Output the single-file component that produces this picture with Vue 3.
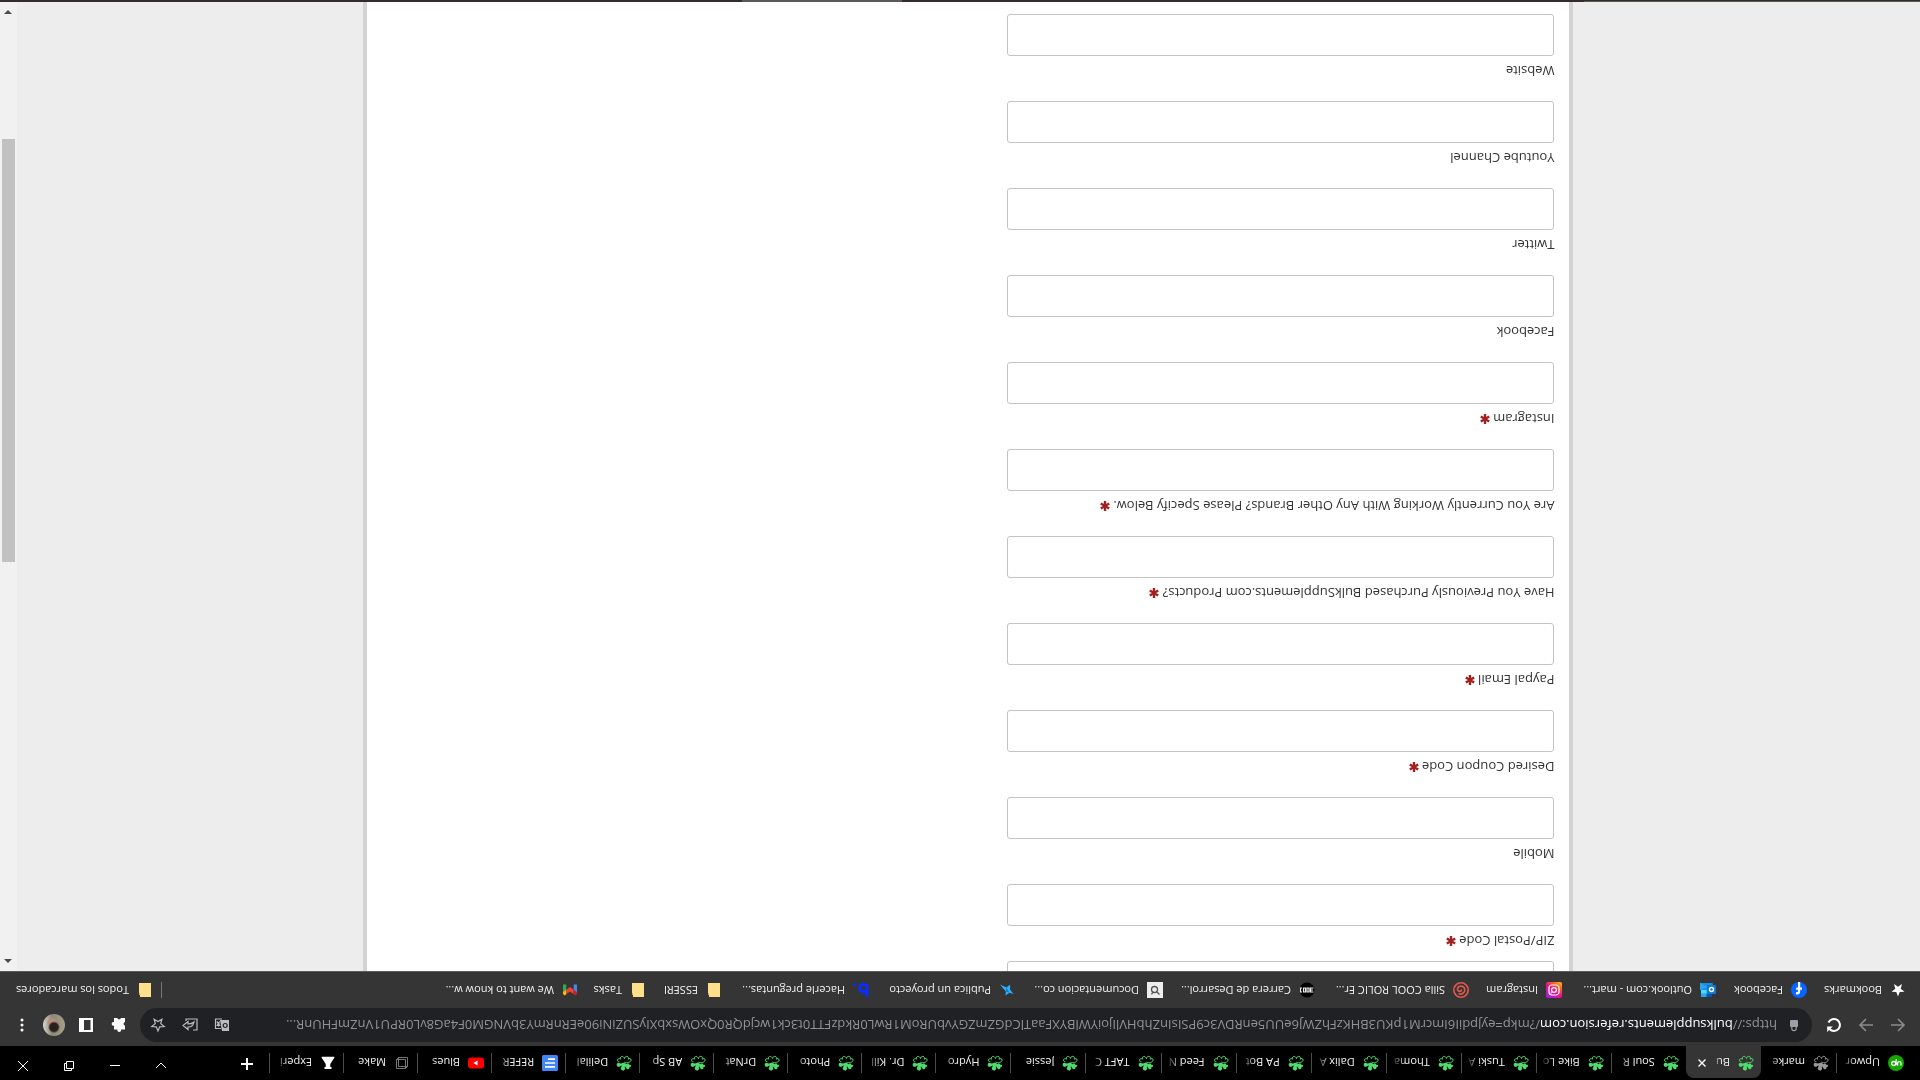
<script setup>
const tabs = [
  { title: 'Upwor', icon: 'upwork' },
  { title: 'marke', icon: 'pinwheel-grey' },
  { title: 'Bu', icon: 'pinwheel', active: true },
  { title: 'Soul R', icon: 'pinwheel' },
  { title: 'Bike Lo', icon: 'pinwheel' },
  { title: 'Tuski A', icon: 'pinwheel' },
  { title: 'Thoma', icon: 'pinwheel' },
  { title: 'Dalix A', icon: 'pinwheel' },
  { title: 'PA Bot', icon: 'pinwheel' },
  { title: 'Feed N', icon: 'pinwheel' },
  { title: 'TAFT C', icon: 'pinwheel' },
  { title: 'Jessie', icon: 'pinwheel' },
  { title: 'Hydro', icon: 'pinwheel' },
  { title: 'Dr. Kill', icon: 'pinwheel' },
  { title: 'Photo', icon: 'pinwheel' },
  { title: 'DrNat', icon: 'pinwheel' },
  { title: 'AB Sp', icon: 'pinwheel' },
  { title: 'Delilal', icon: 'pinwheel' },
  { title: 'REFER', icon: 'docs' },
  { title: 'Blues', icon: 'youtube' },
  { title: 'Make', icon: 'box' },
  { title: 'Experi', icon: 'flask' },
]

const bookmarks = [
  { title: 'Bookmarks', icon: 'star', w: 99 },
  { title: 'Facebook', icon: 'facebook', w: 91 },
  { title: 'Outlook.com - mart...', icon: 'outlook', w: 154 },
  { title: 'Instagram', icon: 'instagram', w: 93 },
  { title: 'Silla COOL ROLIC Er...', icon: 'swirl', w: 154 },
  { title: 'Carrera de Desarrol...', icon: 'badge', w: 152 },
  { title: 'Documentacion co...', icon: 'search', w: 148 },
  { title: 'Publica un proyecto', icon: 'bird', w: 146 },
  { title: 'Hacerle preguntas...', icon: 'letter', w: 147 },
  { title: 'ESSERI', icon: 'folder', w: 76 },
  { title: 'Tasks', icon: 'folder', w: 68 },
  { title: 'We want to know w...', icon: 'gmail', w: 140 },
]

const query =
  '/?mkp=eyJpdiI6ImcrM1pKU3BHKzFhZWJ6eUU5enRDV3c9PSIsInZhbHVlIjoiYWlBYXFaaTlCdGZmZGYvbURoM1RwL0RkdzFTT0t3ck1wcjdQR0QxOWsxbXIySUZiNi90eERnRmY3bVNGM0F4aG8vL0RPU1VnZmFHUnR...'

const fields = [
  { id: 'zip', label: 'ZIP/Postal Code', required: true },
  { id: 'mobile', label: 'Mobile' },
  { id: 'coupon', label: 'Desired Coupon Code', required: true },
  { id: 'paypal', label: 'Paypal Email', required: true },
  { id: 'purchased', label: 'Have You Previously Purchased BulkSupplements.com Products?', required: true },
  { id: 'brands', label: 'Are You Currently Working With Any Other Brands? Please Specify Below.', required: true },
  { id: 'instagram', label: 'Instagram', required: true },
  { id: 'facebook', label: 'Facebook' },
  { id: 'twitter', label: 'Twitter' },
  { id: 'youtube', label: 'Youtube Channel' },
  { id: 'website', label: 'Website' },
]
</script>

<template>
  <div class="screen">
    <svg class="sprite" aria-hidden="true">
      <symbol id="i-pinwheel" viewBox="0 0 16 16">
        <path d="M7.800 8.600 5.300 6.800 4 8 2.600 6.300 .8 6 1.400 3.900 2.600 3.700 2.900 1.900 5 1.700 6.700 4.400 7.200 4.400 6.900 1.800 8.600.3 10.500 1 11.300 2.400 10.300 5.200 10.800 5.600 13 4 15 4.700 15.400 7 14.200 8.300 11 7.500Z" fill="currentColor" />
        <path d="M7.500 9C5.500 7.600.9 8.600.9 11c0 1.500 1.900 1.800 3 .8-.7 1.300-.2 2.900 1.300 2.900 1.400 0 2-1.100 2.300-2.200.6 1.600 1.800 2.500 3.100 2 1.200-.5 1.200-1.800.6-2.600 1.500.8 3.400.4 3.400-1.100 0-1.200-1-1.700-2-1.600" fill="none" stroke="currentColor" />
      </symbol>
      <symbol id="i-pinwheel-grey" viewBox="0 0 16 16"><use href="#i-pinwheel" /></symbol>
      <symbol id="i-upwork" viewBox="0 0 16 16">
        <circle cx="8" cy="8" r="8" fill="#14a800" />
        <path d="M3 5.500v2.200a1.700 1.700 0 0 0 3.400 0V5.500c.8 2 2 4 3.900 4a2 2 0 1 0-2-2L7.600 12" fill="none" stroke="#fff" stroke-width="1.300" />
      </symbol>
      <symbol id="i-docs" viewBox="0 0 16 16">
        <rect width="16" height="16" rx="1.500" fill="#4285f4" />
        <path d="M3 4.200h10M3 8h10M3 11.800h7" stroke="#fff" stroke-width="1.700" />
      </symbol>
      <symbol id="i-youtube" viewBox="0 0 16 16">
        <rect y="2.500" width="16" height="11" rx="3" fill="#f00" />
        <path d="M6.500 5.600v4.800L10.600 8Z" fill="#fff" />
      </symbol>
      <symbol id="i-box" viewBox="0 0 16 16">
        <path d="M2.500 4.500h9v9h-9ZM4.500 2.500h9v9h-9ZM2.500 4.500l2-2M11.500 13.500l2-2" fill="none" stroke="#777" />
      </symbol>
      <symbol id="i-flask" viewBox="0 0 16 16">
        <path d="M4.500 2h7v2h-1.200v3l4 6.200c.3.500 0 1-.6 1H2.300c-.6 0-.9-.5-.6-1l4-6.200V4H4.500Z" fill="#fff" />
      </symbol>

      <symbol id="i-star" viewBox="0 0 16 16">
        <path d="m8 1.500 1.700 4.600 4.800.2-3.800 3 1.300 4.700L8 11.300 4 14l1.300-4.700-3.800-3 4.800-.2Z" fill="#fff" />
      </symbol>
      <symbol id="i-facebook" viewBox="0 0 16 16">
        <circle cx="8" cy="8" r="8" fill="#0866ff" />
        <path d="M6.800 15.900v-5.400H5V8.200h1.800V6.700c0-2.200 1.100-3.200 3-3.200.6 0 1 .1 1.300.2v2h-.9c-.9 0-1.200.4-1.200 1.200v1.300H11l-.4 2.300H9v5.400Z" fill="#fff" />
      </symbol>
      <symbol id="i-outlook" viewBox="0 0 16 16">
        <path d="M4 1h11v7H4Z" fill="#28a8ea" />
        <path d="M4 1h5.500v3.500H4Z" fill="#0358a7" />
        <path d="M9.500 4.500H15V8H9.500Z" fill="#50d9ff" />
        <path d="M2 8h14v7H3.500Z" fill="#1490df" />
        <path d="M16 8v7L8 11Z" fill="#28a8ea" />
        <rect y="4" width="9" height="9" rx="1" fill="#0f78d4" />
        <circle cx="4.500" cy="8.500" r="2" fill="none" stroke="#fff" stroke-width="1.400" />
      </symbol>
      <symbol id="i-instagram" viewBox="0 0 16 16">
        <linearGradient id="insta" x1="0" y1="1" x2=".8" y2="0">
          <stop offset="0" stop-color="#ffc928" />
          <stop offset=".25" stop-color="#ff6a1e" />
          <stop offset=".55" stop-color="#f0127c" />
          <stop offset="1" stop-color="#a41ce0" />
        </linearGradient>
        <rect width="16" height="16" rx="2" fill="url(#insta)" />
        <rect x="3" y="3" width="10" height="10" rx="3" fill="none" stroke="#fff" stroke-width="1.200" />
        <circle cx="8" cy="8" r="2.400" fill="none" stroke="#fff" stroke-width="1.200" />
        <circle cx="10.900" cy="5.100" r=".7" fill="#fff" />
      </symbol>
      <symbol id="i-swirl" viewBox="0 0 16 16">
        <circle cx="8" cy="8" r="7.200" fill="none" stroke="#e2574c" stroke-width="1.600" />
        <path d="M10.500 4.200C7 3.200 4 5.300 4.200 8.400c.2 2.900 3.300 4.400 5.800 3 2.200-1.300 2-4.300-.3-4.800-1.500-.3-2.300.9-1.700 1.900" fill="none" stroke="#e2574c" stroke-width="1.700" />
      </symbol>
      <symbol id="i-badge" viewBox="0 0 16 16">
        <circle cx="8" cy="8" r="7.500" fill="#000" />
        <path d="M1.500 6h3v4h-3M6 6h2v4H6ZM9.500 6h2v4h-2ZM13 6h1.500v4H13M2 8h2.500" fill="none" stroke="#eee" stroke-width="1.200" />
      </symbol>
      <symbol id="i-search" viewBox="0 0 16 16">
        <rect width="16" height="16" fill="#eee" />
        <circle cx="8.500" cy="8.500" r="3" fill="none" stroke="#555" stroke-width="1.300" />
        <path d="M3.500 3.500 6.300 6.300M10 6.300 11.500 3.500" stroke="#555" stroke-width="1.300" />
      </symbol>
      <symbol id="i-bird" viewBox="0 0 16 16">
        <path d="M1.500 4 5.500 5.200 9.500 2.500 9.200 6.500 15 13.500 8.600 10.500 4.800 13.500 5 8.500Z" fill="#29b2fe" />
        <path d="M5.500 5.200 9.200 6.500 8.600 10.500Z" fill="#0d7fc4" />
      </symbol>
      <symbol id="i-letter" viewBox="0 0 16 16">
        <path d="M2 1v13M2 9.500a3.700 3.700 0 1 1 0 1" fill="none" stroke="#0a2cff" stroke-width="3" />
        <circle cx="14.200" cy="13.800" r="1.500" fill="#0a2cff" />
      </symbol>
      <symbol id="i-folder" viewBox="0 0 16 16">
        <path d="M2 1h11v2h1v12H2Z" fill="#ffe08a" />
        <path d="M13 3h1v2h-1Z" fill="#d9a93d" />
      </symbol>
      <symbol id="i-gmail" viewBox="0 0 16 16">
        <path d="M1 4.500 4.300 7v6.500H1Z" fill="#4285f4" />
        <path d="M15 4.500 11.700 7v6.500H15Z" fill="#34a853" />
        <path d="M11.700 3.800 13.500 2.600 15 4v1.800L11.700 8.200Z" fill="#fbbc04" />
        <path d="M4.300 8.200V3.800L8 6.600l3.700-2.800v4.400L8 11Z" fill="#ea4335" />
        <path d="M1 5.800V4l1.500-1.400 1.800 1.200v4.400Z" fill="#c5221f" />
      </symbol>
    </svg>

    <header class="tabstrip">
      <div class="tabs" role="tablist">
        <button
          v-for="t in tabs"
          :key="t.title"
          type="button"
          role="tab"
          class="tab"
          :class="{ active: t.active, grey: t.icon === 'pinwheel-grey' }"
          :aria-selected="!!t.active"
        >
          <svg class="fav"><use :href="'#i-' + t.icon" /></svg>
          <span class="title">{{ t.title }}</span>
          <svg v-if="t.active" class="close" viewBox="0 0 8 8"><path d="M.5.5l7 7M7.500.5l-7 7" /></svg>
        </button>
      </div>
      <button type="button" class="newtab" aria-label="New tab">
        <svg viewBox="0 0 12 12"><path d="M6 0v12M0 6h12" /></svg>
      </button>
      <div class="controls">
        <button type="button" aria-label="Search tabs"><svg viewBox="0 0 12 12"><path d="m1 4 5 5 5-5" /></svg></button>
        <button type="button" aria-label="Minimize"><svg viewBox="0 0 12 12"><path d="M1 6.500h10" /></svg></button>
        <button type="button" aria-label="Restore"><svg viewBox="0 0 12 12"><path d="M1.500 3.500h7v7h-7ZM3.500 3.500v-2h7v7h-2" /></svg></button>
        <button type="button" aria-label="Close"><svg viewBox="0 0 12 12"><path d="m1 1 10 10M11 1 1 11" /></svg></button>
      </div>
    </header>

    <nav class="toolbar">
      <button type="button" class="tool dim" aria-label="Back">
        <svg viewBox="0 0 16 16"><path d="M15 8H2M8 2 2 8l6 6" /></svg>
      </button>
      <button type="button" class="tool dim" aria-label="Forward">
        <svg viewBox="0 0 16 16"><path d="M1 8h13M8 2l6 6-6 6" /></svg>
      </button>
      <button type="button" class="tool" aria-label="Reload">
        <svg viewBox="0 0 16 16"><path d="M13.500 10.500A6 6 0 1 1 12.500 4L14 5.500" /><path d="M14.800 1v5.600H9.200Z" class="solid" /></svg>
      </button>
      <div class="omnibox">
        <svg class="lock" viewBox="0 0 12 14">
          <rect x="2" y="5" width="8" height="7" rx="1" fill="#9aa0a6" />
          <path d="M3.800 5V3.500a2.200 2.200 0 0 1 4.400 0V5" fill="none" stroke="#9aa0a6" stroke-width="1.200" />
        </svg>
        <div class="url" role="textbox" aria-label="Address">https://<b>bulksupplements.refersion.com</b>{{ query }}</div>
        <button type="button" class="tool soft" aria-label="Translate">
          <svg viewBox="0 0 16 16">
            <path d="M1 2h7l2 11H1Z" class="fill" />
            <path d="M9 4.500h5.500v9.500H8" />
            <path d="M9.500 7.500h4M11.500 6.500v1M10 11.500c1.500-.6 2.500-2 2.700-4M10.300 8.500l3 3" />
            <circle cx="4.800" cy="7.500" r="2" class="cut" />
          </svg>
        </button>
        <button type="button" class="tool soft" aria-label="Share">
          <svg viewBox="0 0 16 16"><path d="M5 3H1v11h11v-2" /><path d="M4 11c.5-3.500 2.500-5 6-5V3.500l5 4-5 4V9C7.500 9 5.500 9.500 4 11Z" /></svg>
        </button>
        <button type="button" class="tool soft" aria-label="Bookmark">
          <svg viewBox="0 0 16 16"><path d="m8 2 1.700 4.200 4.500.3-3.500 2.900 1.200 4.400L8 11.400l-3.900 2.400 1.200-4.400-3.500-2.900 4.500-.3Z" /></svg>
        </button>
      </div>
      <button type="button" class="tool" aria-label="Extensions">
        <svg viewBox="0 0 16 16"><path d="M1 3.500h4a1.900 1.900 0 1 1 3.600 0H12v3.800a1.900 1.900 0 1 1 0 3.700v4H8.700a1.900 1.900 0 0 0-3.700 0H1v-4a1.900 1.900 0 0 0 0-3.700Z" class="solid" /></svg>
      </button>
      <button type="button" class="tool" aria-label="Side panel">
        <svg viewBox="0 0 16 16"><path d="M1 1h14v14H1ZM3.500 3v10H10V3Z" fill-rule="evenodd" class="solid" /></svg>
      </button>
      <button type="button" class="tool" aria-label="Profile"><span class="avatar"></span></button>
      <button type="button" class="tool" aria-label="Menu">
        <svg viewBox="0 0 16 16"><g class="solid"><circle cx="8" cy="3" r="1.500" /><circle cx="8" cy="8" r="1.500" /><circle cx="8" cy="13" r="1.500" /></g></svg>
      </button>
    </nav>

    <nav class="bookmarks">
      <a v-for="b in bookmarks" :key="b.title" href="#" :style="{ width: b.w + 'px' }">
        <svg class="fav"><use :href="'#i-' + b.icon" /></svg>{{ b.title }}
      </a>
      <a href="#" class="all"><svg class="fav"><use href="#i-folder" /></svg>Todos los marcadores</a>
    </nav>

    <div class="page">
      <main class="canvas">
        <form class="panel" @submit.prevent>
          <input class="previous" type="text" aria-label="State" />
          <div v-for="f in fields" :key="f.id" class="field">
            <label :for="f.id">
              {{ f.label }}
              <svg v-if="f.required" class="req" viewBox="0 0 10 10"><path d="M5 0v10M.8 2.500l8.400 5M.8 7.500l8.400-5" /></svg>
            </label>
            <input :id="f.id" type="text" :required="f.required" />
          </div>
        </form>
      </main>
      <div class="scrollbar" aria-hidden="true">
        <span class="arrow"><svg viewBox="0 0 8 4"><path d="M0 4 4 0l4 4Z" /></svg></span>
        <span class="before"></span>
        <span class="thumb"></span>
        <span class="after"></span>
        <span class="arrow"><svg viewBox="0 0 8 4"><path d="M0 0l4 4 4-4Z" /></svg></span>
      </div>
    </div>

    <footer class="taskbar"><span class="search"></span><span class="running"></span></footer>
  </div>
</template>

<style>
body {
  background: #ededed;
  overflow: hidden;
}
</style>

<style scoped>
.screen {
  display: flex;
  flex-direction: column;
  min-height: 100vh;
  transform: rotate(180deg);
  font-family: "Open Sans", "Noto Sans", sans-serif;
  font-size: 11px;
  color: #fff;
  background: #ededed;
}
.screen * {
  box-sizing: border-box;
}
.sprite {
  position: absolute;
  width: 0;
  height: 0;
}
button {
  padding: 0;
  border: 0;
  background: none;
  color: inherit;
  font: inherit;
}
.fav {
  flex: none;
  width: 16px;
  height: 16px;
}

.tabstrip {
  display: flex;
  height: 34px;
  padding-left: 9px;
  background: #000;
}
.tabs {
  display: flex;
  flex: 1;
  min-width: 0;
}
.tab {
  position: relative;
  display: flex;
  flex: 1 1 74px;
  align-items: center;
  gap: 8px;
  min-width: 0;
  padding: 0 5px 0 7px;
  color: #4fdc6c;
}
/* Leftover pixels go to the leading tabs. */
.tab:nth-child(-n + 13) {
  flex-basis: 75px;
}
.tab::after {
  content: "";
  position: absolute;
  right: 0;
  top: 7px;
  width: 1px;
  height: 20px;
  background: #4c4c4c;
}
.tab.grey {
  color: #9a9a9a;
}
.tab.grey::after,
.tab.active::after {
  display: none;
}
.tab.active {
  margin-top: 2px;
  padding: 0 8px 2px 7px;
  border-radius: 8px 8px 0 0;
  background: #353535;
}
.title {
  flex: 1;
  min-width: 0;
  text-align: left;
  white-space: nowrap;
  color: #f1f1f1;
  mask-image: linear-gradient(to left, transparent, #000 14px);
}
.active .title {
  mask-image: linear-gradient(to left, transparent, #000 6px);
}
.close {
  flex: none;
  width: 8px;
  height: 8px;
  margin-right: 4px;
  stroke: #fff;
  stroke-width: 1.400;
}
.newtab {
  width: 44px;
}
.newtab svg {
  width: 12px;
  height: 12px;
  stroke: #fff;
  stroke-width: 2;
}
.controls {
  display: flex;
  margin-left: 41px;
}
.controls button {
  width: 46px;
  height: 30px;
}
.controls svg {
  width: 12px;
  height: 12px;
  fill: none;
  stroke: #fff;
}

.toolbar {
  display: flex;
  align-items: center;
  height: 42px;
  padding: 0 6px;
  background: #353535;
}
.tool {
  display: flex;
  flex: none;
  align-items: center;
  justify-content: center;
  width: 32px;
  height: 32px;
}
.tool svg {
  width: 16px;
  height: 16px;
  fill: none;
  stroke: #fff;
  stroke-width: 2;
}
.tool .solid {
  fill: #fff;
  stroke: none;
}
.dim svg {
  stroke: #8b8b8b;
  stroke-width: 1.600;
}
.soft svg {
  stroke: #b9bcc0;
  stroke-width: 1.200;
}
.soft .fill {
  fill: #b9bcc0;
  stroke: none;
}
.soft .cut {
  stroke: #202124;
}
.omnibox {
  display: flex;
  flex: 1;
  align-items: center;
  min-width: 0;
  height: 34px;
  margin: 0 6px;
  padding: 0 2px 0 12px;
  border-radius: 17px;
  background: #202124;
}
.lock {
  flex: none;
  width: 12px;
  height: 14px;
  margin-right: 11px;
}
.url {
  flex: 1;
  min-width: 0;
  overflow: hidden;
  white-space: nowrap;
  font-size: 13px;
  color: #8f9398;
}
.url b {
  font-weight: 400;
  color: #fff;
}
.avatar {
  width: 22px;
  height: 22px;
  border-radius: 50%;
  background:
    radial-gradient(circle at 50% 40%, #2a211d 0 4px, transparent 6px),
    radial-gradient(circle at 60% 62%, #b58f7b 0 3px, transparent 5px),
    linear-gradient(90deg, #a79f85, #8d8878 60%, #d8d6cf);
}

.bookmarks {
  display: flex;
  align-items: center;
  height: 33px;
  padding: 0 13px 5px 14px;
  border-bottom: 1px solid #5c5c5c;
  background: #353535;
}
.bookmarks a {
  display: flex;
  flex: none;
  align-items: center;
  gap: 8px;
  height: 16px;
  white-space: nowrap;
  color: #f1f1f1;
  text-decoration: none;
}
.bookmarks .all {
  width: 149px;
  margin-left: auto;
  padding-left: 8px;
  border-left: 1px solid #777;
}

.page {
  display: flex;
  flex: 1;
}
.canvas {
  display: flex;
  flex: 1;
  justify-content: center;
  overflow: hidden;
}
.panel {
  display: flex;
  flex-direction: column;
  width: 1210px;
  max-width: 100%;
  padding: 0 15px 12px;
  border: solid #d3d3d3;
  border-width: 0 4px;
  background: #fff;
}
.panel input {
  display: block;
  width: 547px;
  max-width: 100%;
  height: 42px;
  border: 1px solid #c4c4c4;
  border-radius: 3px;
  background: #fff;
}
/* Scrolled mostly out of view above the first labelled field. */
.panel .previous {
  margin: -32px 0 10px;
}
.field + .field {
  margin-top: 20px;
}
.field label {
  display: block;
  margin-bottom: 5px;
  font-size: 13px;
  line-height: 20px;
  color: #333;
}
.req {
  width: 10px;
  height: 10px;
  stroke: #a32020;
  stroke-width: 2.400;
}

.scrollbar {
  display: flex;
  flex: none;
  flex-direction: column;
  width: 17px;
  padding: 0 2px;
  background: #f1f1f1;
}
.arrow {
  display: flex;
  align-items: center;
  justify-content: center;
  height: 20px;
}
.arrow svg {
  width: 8px;
  height: 4px;
  fill: #4c4c4c;
}
.before {
  flex: 389;
}
.thumb {
  flex: 423;
  background: #c1c1c1;
}
.after {
  flex: 117;
}

.taskbar {
  display: flex;
  justify-content: space-between;
  height: 2px;
  background: #322d2a;
}
.search {
  width: 336px;
  border-bottom: 1px solid #322d2a;
  background: #5a5652;
}
.running {
  width: 160px;
  margin-right: 742px;
  background: #5c5a58;
}
</style>
